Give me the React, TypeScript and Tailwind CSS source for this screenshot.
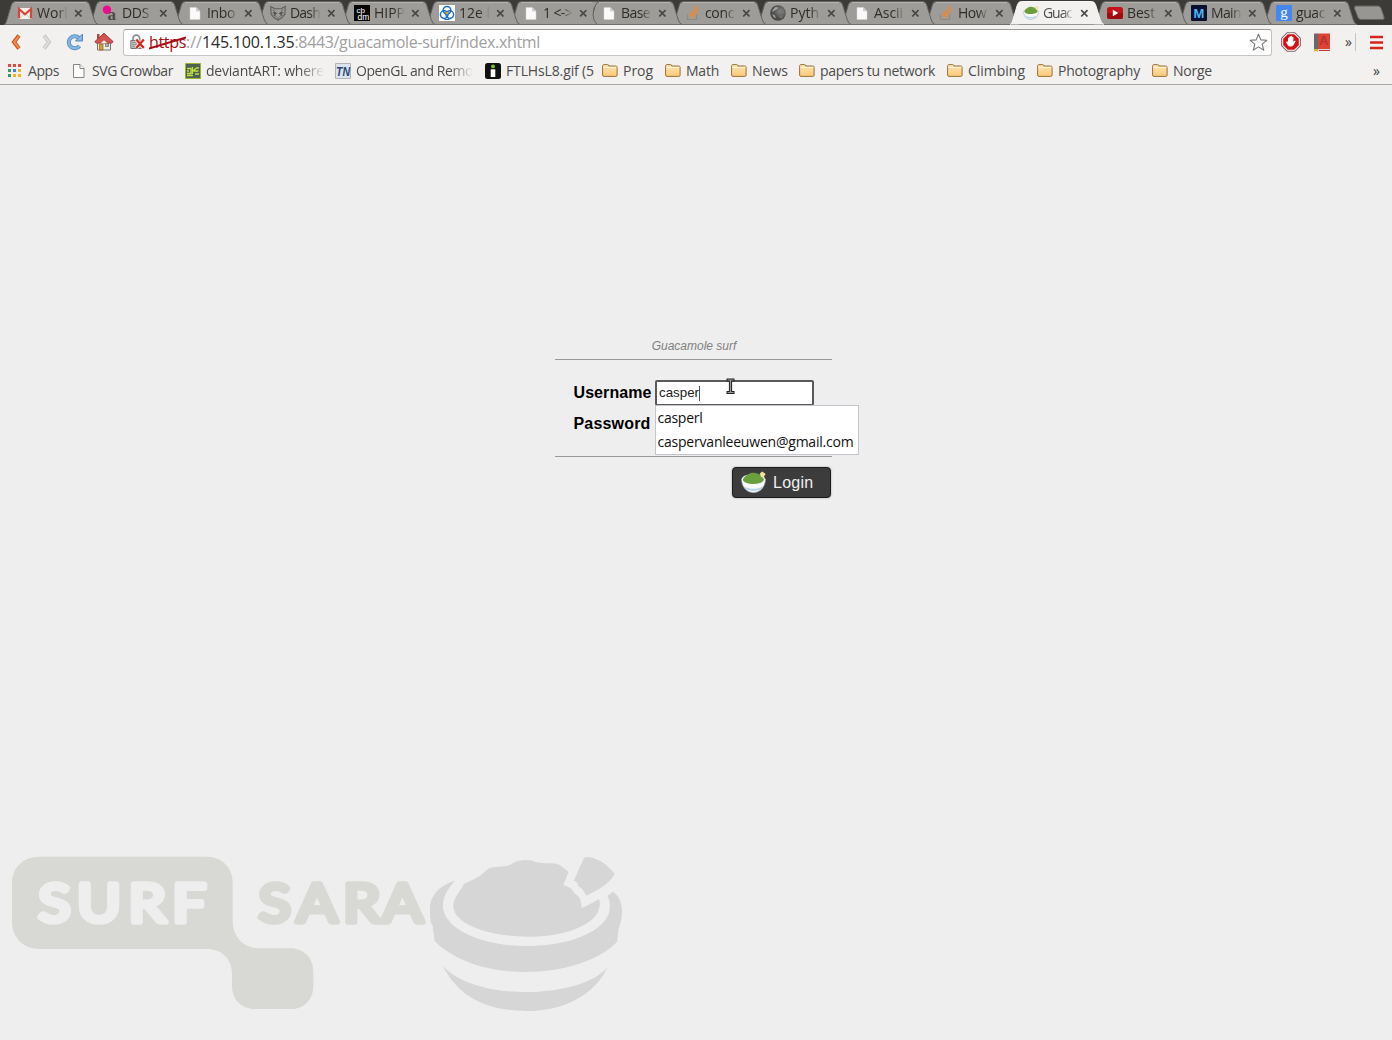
import { useLayoutEffect, useRef, useState } from "react";
import type { ReactNode } from "react";

/** A single line of text whose letter spacing is adjusted to span `width` pixels. */
function Fit({ text, width, className = "" }: { text: string; width: number; className?: string }) {
  const ref = useRef<HTMLSpanElement>(null);
  const [spacing, setSpacing] = useState(0);
  useLayoutEffect(() => {
    if (ref.current) {
      const natural = ref.current.getBoundingClientRect().width;
      setSpacing((width - natural) / text.length);
    }
  }, [text, width]);
  return (
    <span ref={ref} className={`inline-block whitespace-pre ${className}`} style={{ letterSpacing: spacing }}>
      {text}
    </span>
  );
}

const Page = ({ bright = false }: { bright?: boolean }) => (
  <svg width="16" height="16" viewBox="0 0 16 16">
    <path
      d={bright ? "M3 2.500h6.500l3.500 3.500v8.500H3z" : "M2.500 1.500h6.500l4 4v9H2.500z"}
      fill={bright ? "#fafafa" : "#fcfcfc"}
      stroke={bright ? "#d4d4d2" : "#858585"}
      strokeWidth={bright ? 0.5 : 1}
    />
    <path
      d={bright ? "M9.500 2.500v3.500h3.500z" : "M9 1.500v4h4"}
      fill={bright ? "#d0d0ce" : "#fff"}
      stroke={bright ? "#bbb" : "#858585"}
      strokeWidth={bright ? 0.5 : 1}
    />
  </svg>
);

const Gmail = () => (
  <svg width="16" height="16" viewBox="0 0 16 16">
    <rect x="1" y="3" width="14" height="11" fill="#f2f0ee" />
    <path d="M3 13l4-4M13 13L9 9" stroke="#ccc" />
    <path d="M2 13.500V4l6 5.300L14 4v9.500" fill="none" stroke="#d5473b" strokeWidth="2.200" />
  </svg>
);

const Dds = () => (
  <svg width="16" height="16" viewBox="0 0 16 16">
    <circle cx="5" cy="4.800" r="4.200" fill="#f00a8c" />
    <text x="5.500" y="14.500" fontFamily="Liberation Serif, serif" fontWeight="700" fontSize="17" fill="#4b4b4b">a</text>
  </svg>
);

const Fox = () => (
  <svg width="16" height="16" viewBox="0 0 16 16" fill="none" stroke="#5d5d59">
    <path d="M.8 1.500l4 2.200h6.400l4-2.200-.3 7.700L12 12.500 8 15.200 4 12.500 1.100 9.200z" strokeWidth="1.100" />
    <path d="M2.800 4.500l2 1.800M13.200 4.500l-2 1.800M2.500 8l2.500-1.200L7 9M13.500 8L11 6.800 9 9M3.500 10l3 1.500M12.500 10l-3 1.500M7 13h2" strokeWidth="1" />
    <circle cx="5" cy="8.500" r="1" fill="#444" />
    <circle cx="11" cy="8.500" r="1" fill="#444" />
  </svg>
);

const Cbdm = () => (
  <svg width="16" height="16" viewBox="0 0 16 16">
    <path d="M0 0h16v16H0z" fill="#050505" />
    <text x="2.500" y="7.500" fontFamily="Liberation Sans, sans-serif" fontSize="8" fill="#fff">cb</text>
    <text x="3.500" y="14.800" fontFamily="Liberation Sans, sans-serif" fontSize="8.500" fill="#fff">dm</text>
  </svg>
);

const Rings = () => (
  <svg width="16" height="16" viewBox="0 0 16 16">
    <path d="M0 0h16v16H0z" fill="#fff" />
    <g fill="none" stroke="#1d6fc4" strokeWidth="1.500">
      <circle cx="8" cy="5.200" r="3.800" />
      <circle cx="5.200" cy="9.600" r="3.800" />
      <circle cx="10.800" cy="9.600" r="3.800" />
    </g>
    <circle cx="8" cy="8" r="1.600" fill="#f0a92b" stroke="#1d6fc4" strokeWidth=".6" />
    <path d="M5.500 14.500h5" stroke="#1d6fc4" />
  </svg>
);

const Stack = () => (
  <svg width="16" height="16" viewBox="0 0 16 16" fill="none">
    <path d="M2.500 9.500v5h9v-5" stroke="#8d8b87" strokeWidth="1.200" />
    <path d="M4.300 12.500h5.600" stroke="#b39b83" strokeWidth="1.400" />
    <path d="M4.400 10l5.600 1M5.400 6.800l5.200 2.800M7.700 3.800l4 4.400M11 .8l2 5.400" stroke="#e08b3e" strokeWidth="1.900" />
  </svg>
);

const Globe = () => (
  <svg width="16" height="16" viewBox="0 0 16 16">
    <defs>
      <radialGradient id="globe" cx=".65" cy=".4">
        <stop stopColor="#858583" />
        <stop offset="1" stopColor="#484846" />
      </radialGradient>
    </defs>
    <circle cx="8" cy="8" r="7.800" fill="url(#globe)" />
    <path d="M2.500 5l3-3 3 .5-2 2-3 1.500-1 2zM2 9l2.500 1L6 13l-2-.5z" fill="#a3a3a0" />
    <path d="M10 5l3-.5 1.500 3-2 1.500-2-1zM9 11l3-1 1 1-2 3z" fill="#747472" />
  </svg>
);

const Bowl = ({ size = 16 }: { size?: number }) => (
  <svg width={size} height={size} viewBox="0 0 16 16">
    <path d="M.3 5.800c0 4.400 2.800 8.700 7.600 8.700s7.800-4.300 7.800-8.700z" fill="#f7f9fb" stroke="#8c959d" strokeWidth=".4" />
    <path d="M1.600 10.200c3 2.400 9.800 2.400 12.800 0l-1 1.700c-2.600 2-8.200 2-10.800 0z" fill="#b9d3e6" />
    <ellipse cx="8" cy="6" rx="7.500" ry="3.500" fill="#f6f8f5" />
    <path d="M1.200 6.400C1.800 4.200 3.600 3.700 5 2.600c1.500-1 4-1 5.300-.3 2 .4 3.900 2 4.400 4C13.800 9.800 2.600 9.900 1.200 6.400z" fill="#6a9f3e" />
    <path d="M12 2.200l1.600-1.200 2.200 1.500-1.600 2.500-1.300-.5z" fill="#f3dfa0" />
  </svg>
);

const Tube = () => (
  <svg width="16" height="16" viewBox="0 0 16 16">
    <rect y="2" width="16" height="12" rx="2.500" fill="#c41216" />
    <path d="M0 8h16v3.500A2.500 2.500 0 0 1 13.500 14h-11A2.500 2.500 0 0 1 0 11.500z" fill="#a00b0e" />
    <path d="M5.800 4.800v6.400L11.300 8z" fill="#fff" />
  </svg>
);

const Letter = ({ ch, bg, fg, font, y, size, weight = 700 }: { ch: string; bg: string; fg: string; font: string; y: number; size: number; weight?: number }) => (
  <svg width="16" height="16" viewBox="0 0 16 16">
    <rect width="16" height="16" rx="1" fill={bg} />
    <text x="8" y={y} textAnchor="middle" fontFamily={font} fontWeight={weight} fontSize={size} fill={fg}>
      {ch}
    </text>
  </svg>
);

const Folder = () => (
  <svg width="16" height="16" viewBox="0 0 16 16">
    <defs>
      <linearGradient id="folder" x2="0" y2="1">
        <stop stopColor="#ffe7b5" />
        <stop offset="1" stopColor="#fbc876" />
      </linearGradient>
    </defs>
    <path d="M.6 3.200c0-1 .4-1.600 1.200-1.600h3.800c.8 0 1.200.5 1.200 1.400h6.800c1 0 1.500.5 1.500 1.400v7.700c0 .8-.4 1.300-1.300 1.300H2c-.9 0-1.400-.5-1.400-1.300z" fill="url(#folder)" stroke="#9a7038" />
    <path d="M1.500 4.500h12.700" stroke="#fff3d8" />
  </svg>
);

const Apps = () => (
  <svg width="16" height="16" viewBox="0 0 16 16">
    <path d="M1 1h3v3H1zM6 1h3v3H6zM11 1h3v3h-3z" fill="#dd4b3e" />
    <path d="M1 6h3v3H1z" fill="#2f9d58" />
    <path d="M6 6h3v3H6z" fill="#3f7fe0" />
    <path d="M11 6h3v3h-3zM6 11h3v3H6zM11 11h3v3h-3z" fill="#f0b51e" />
    <path d="M1 11h3v3H1z" fill="#2f9d58" />
  </svg>
);

const Deviant = () => (
  <svg width="16" height="16" viewBox="0 0 16 16">
    <path d="M.5.5h15v15H.5z" fill="#4f6152" stroke="#9ab52b" />
    <path d="M2 5.500h4v5H2M2 8h2M2 12.500h6M7.500 4v7M8 8l3.500-3H14M9 8h4.500M10 11h4" fill="none" stroke="#c3e03d" strokeWidth="1.300" />
  </svg>
);

const Tn = () => (
  <svg width="16" height="16" viewBox="0 0 16 16">
    <path d="M.5.5h15v15H.5z" fill="#dbe4ee" stroke="#b0b4b8" />
    <text x="1" y="13" fontFamily="Liberation Sans, sans-serif" fontStyle="italic" fontWeight="700" fontSize="12" textLength="14" lengthAdjust="spacingAndGlyphs" fill="#2b4772">TN</text>
  </svg>
);

const Imgur = () => (
  <svg width="16" height="16" viewBox="0 0 16 16">
    <rect width="16" height="16" rx="2.500" fill="#111" />
    <circle cx="8" cy="3.400" r="1.900" fill="#7cc42a" />
    <path d="M5.700 6.300h4.600V14H5.700z" fill="#fff" />
  </svg>
);

type Tab = { label: string; icon: ReactNode; width: string; text: number; active?: boolean; short?: boolean };

const tabs: Tab[] = [
  { label: "Worl", icon: <Gmail />, width: "w-[85px]", text: 31 },
  { label: "DDS", icon: <Dds />, width: "w-[85px]", text: 27 },
  { label: "Inbo", icon: <Page bright />, width: "w-[83px]", text: 28 },
  { label: "Dash", icon: <Fox />, width: "w-[84px]", text: 30 },
  { label: "HIPP", icon: <Cbdm />, width: "w-[85px]", text: 31 },
  { label: "12e l", icon: <Rings />, width: "w-[84px]", text: 31 },
  { label: "1 <->", icon: <Page bright />, width: "w-[78px]", text: 29, short: true },
  { label: "Base", icon: <Page bright />, width: "w-[84px]", text: 29 },
  { label: "conc", icon: <Stack />, width: "w-[85px]", text: 29 },
  { label: "Pyth", icon: <Globe />, width: "w-[84px]", text: 29 },
  { label: "Ascii", icon: <Page bright />, width: "w-[84px]", text: 29 },
  { label: "How", icon: <Stack />, width: "w-[85px]", text: 28 },
  { label: "Guac", icon: <Bowl />, width: "w-[84px]", text: 29, active: true },
  { label: "Best", icon: <Tube />, width: "w-[84px]", text: 28 },
  {
    label: "Main",
    icon: <Letter ch="M" bg="#0a1030" fg="#4db4f5" font="Liberation Sans, sans-serif" y={12.5} size={13} />,
    width: "w-[85px]",
    text: 30,
  },
  {
    label: "guac",
    icon: <Letter ch="g" bg="#4587ee" fg="#fff" font="Liberation Serif, serif" y={11.5} size={15} weight={400} />,
    width: "w-[84px]",
    text: 29,
  },
];

function TabStrip() {
  return (
    <div className="flex h-[25px] overflow-hidden bg-[#3c3b37] pl-1">
      {tabs.map((t, i) => (
        <div key={i} className={`relative h-[25px] shrink-0 ${t.width}`} style={{ zIndex: t.active ? 40 : 30 - i }}>
          <svg className="absolute left-0 top-0" width="96" height="25" viewBox="0 0 96 25">
            <path
              d={
                t.short
                  ? "M0 24.500C2 24 2.200 21.500 3.200 19L7.500 4.500Q8.500 1.500 11.500 1.500H88Q83 7 83 14Q83 21 87 24.500"
                  : "M0 24.500C2 24 2.200 21.500 3.200 19L7.500 4.500Q8.500 1.500 11.500 1.500H81.500Q84.500 1.500 85.500 4.500L90 19Q91.500 24 94 24.500"
              }
              fill={t.active ? "#f2f1f0" : "#9d9c98"}
              stroke={t.active ? "#f7f7f6" : "#63625e"}
            />
            {!t.active && <path d="M11 2.500H82" stroke="#b5b4b0" />}
            {!t.active && <path d="M1 24.500H94" stroke="#6f6e6a" />}
          </svg>
          <div className="relative flex h-full items-center pl-[13px] pt-px">
            <span className="w-[16px] shrink-0">{t.icon}</span>
            <div
              className={`ml-1 w-[31px] overflow-hidden text-[14px] leading-5 [mask-image:linear-gradient(90deg,#000_65%,transparent)] ${t.active ? "text-[#4c4c4c]" : "text-[#302d27]"}`}
            >
              <Fit text={t.label} width={t.text} />
            </div>
            <svg className="ml-[6px]" width="9" height="9" viewBox="0 0 9 9">
              <path d="M1.200 1.200l6.300 6.300M7.500 1.200l-6.300 6.300" stroke="#484743" strokeWidth="1.700" />
            </svg>
          </div>
        </div>
      ))}
      <svg className="ml-[6px] mt-[5px] shrink-0" width="34" height="16" viewBox="0 0 34 16">
        <path d="M3 1h22q2 0 3 2l3 9q.8 2.500-1.500 2.500H8q-2 0-3-2L1.500 3.500Q1 1 3 1z" fill="#979692" stroke="#65645f" />
      </svg>
    </div>
  );
}

const Chevron = ({ flip = false }: { flip?: boolean }) => (
  <svg width="14" height="18" viewBox="0 0 14 18" fill="none">
    <path d={flip ? "M4 2.500l5 6.500-5 6.500" : "M11 2.500L6 9l5 6.500"} stroke={flip ? "#c9c8c6" : "#c6501c"} strokeWidth="4" />
    <path d={flip ? "M4 3l5 6-5 6" : "M11 3L6 9l5 6"} stroke={flip ? "#dddcda" : "#f28a50"} strokeWidth="2" />
  </svg>
);

function Toolbar() {
  return (
    <div className="flex h-[34px] items-center bg-[#f2f1f0] pl-[8px]">
      <Chevron />
      <span className="ml-[18px]"><Chevron flip /></span>
      <svg className="ml-[12px]" width="18" height="18" viewBox="0 0 18 18" fill="none">
        <path d="M13.500 13A6 6 0 1 1 13 5" stroke="#4e87bd" strokeWidth="4" />
        <path d="M9.500 8h7V1z" fill="#8ab8e3" stroke="#4e87bd" />
        <path d="M13.500 13A6 6 0 1 1 13 5" stroke="#86b5e1" strokeWidth="2.400" />
      </svg>
      <svg className="ml-[10px]" width="20" height="20" viewBox="0 0 20 20">
        <path d="M3.500 9h13v9h-13z" fill="#eeede6" stroke="#78776f" />
        <path d="M5.500 12h3.500v6H5.500z" fill="#d99a32" stroke="#8b631b" strokeWidth=".7" />
        <path d="M11.500 11.500h3v3h-3z" fill="#9cb5d0" stroke="#666" strokeWidth=".7" />
        <path d="M3 2h2.500v5H3z" fill="#a34c46" />
        <path d="M10 1.200L.8 9.700l1.500 1.400h15.400l1.500-1.400z" fill="#d05252" stroke="#a53a3a" />
        <path d="M6.500 11.200l3.500-3 3.500 3z" fill="#eeede6" />
      </svg>
      <div className="ml-[9px] flex h-[27px] w-[1149px] items-center rounded-[3px] border border-[#c5c4c2] border-t-[#9c9b98] bg-white pl-[6px]">
        <svg width="17" height="16" viewBox="0 0 17 16">
          <path d="M3 7V4.500a3.300 3.300 0 0 1 6.600 0V7" fill="none" stroke="#8e8e8e" strokeWidth="1.700" />
          <path d="M.8 6.500h10.500v8H.8z" fill="#c0c0c0" stroke="#777" />
          <path d="M2 8.500h8M2 10.500h8M2 12.500h8" stroke="#959595" />
          <path d="M6.300 5.500l7.500 8.500M13.800 5.500l-7.500 8.500" stroke="#fff" strokeWidth="3.500" />
          <path d="M6.300 5.500l7.500 8.500M13.800 5.500l-7.500 8.500" stroke="#d7261e" strokeWidth="2.300" />
        </svg>
        <div className="ml-[2px] flex whitespace-pre text-[16px] leading-6 text-[#a0a0a0]">
          <span className="relative text-[#a80c12]">
            <Fit text="https" width={37} />
            <svg className="absolute left-0 top-[6px]" width="37" height="14" viewBox="0 0 37 14">
              <path d="M0 12.500L37 1.500" stroke="#a80c12" strokeWidth="2" />
            </svg>
          </span>
          <Fit text="://" width={16} />
          <Fit text="145.100.1.35" width={92.5} className="text-[#2b2b2b]" />
          <Fit text=":8443/guacamole-surf/index.xhtml" width={245.5} />
        </div>
        <svg className="ml-auto mr-[3px]" width="19" height="19" viewBox="0 0 19 19">
          <path d="M9.500 1.300l2.300 5.600 6 .4-4.600 3.900 1.500 5.900-5.200-3.200-5.200 3.200 1.500-5.900L1.200 7.300l6-.4z" fill="#fff" stroke="#737373" strokeLinejoin="round" strokeWidth="1.100" />
        </svg>
      </div>
      <svg className="ml-[9px]" width="20" height="20" viewBox="0 0 20 20">
        <path d="M6.200.7h7.600l5.500 5.500v7.600l-5.500 5.500H6.200L.7 13.800V6.200z" fill="#fff" stroke="#7b6666" strokeWidth="1.100" />
        <path d="M6.800 2.200h6.400l4.600 4.600v6.400l-4.600 4.600H6.800l-4.600-4.600V6.800z" fill="#d31217" />
        <path d="M6 9.500l1 .2V6.300c0-1 1.300-1 1.300 0V5c0-1 1.400-1 1.400 0v-.5c0-1 1.400-1 1.400 0V5.500c0-1 1.300-1 1.300 0v4.300l1.100-1c.8-.5 1.400.2 1 .8l-2.300 4c-.7 1.300-4.500 1.300-5.200 0L5.200 10.500c-.3-.7.3-1 .8-1z" fill="#fff" />
      </svg>
      <svg className="ml-[13px]" width="17" height="19" viewBox="0 0 17 19">
        <path d="M0 .5h4v17H0z" fill="#696969" />
        <path d="M4 .5h12V16H4z" fill="#db4437" />
        <text x="9.700" y="12.300" textAnchor="middle" fontFamily="Liberation Sans, sans-serif" fontWeight="700" fontSize="13" fill="#b9332a">A</text>
        <path d="M3 16h13v2H3z" fill="#d9d9d9" />
        <path d="M5 17.500h11" stroke="#c43c31" />
        <path d="M0 16h4v3l-2-1.300L0 19z" fill="#e3b33e" />
      </svg>
      <span className="ml-[14px] text-[14px] leading-4 text-[#3a3a3a]">»</span>
      <span className="ml-[3px] h-[18px] w-px bg-[#c5c4c1]" />
      <svg className="ml-[14px]" width="13" height="15" viewBox="0 0 13 15">
        <path d="M0 2h13M0 7.500h13M0 13h13" stroke="#d6241f" strokeWidth="2.600" />
      </svg>
    </div>
  );
}

type Bookmark = { label: string; icon: ReactNode; width: string; text: number; fade?: boolean };

const bookmarks: Bookmark[] = [
  { label: "Apps", icon: <Apps />, width: "w-[64px]", text: 31 },
  { label: "SVG Crowbar", icon: <Page />, width: "w-[114px]", text: 81 },
  { label: "deviantART: where", icon: <Deviant />, width: "w-[150px]", text: 118, fade: true },
  { label: "OpenGL and Remo", icon: <Tn />, width: "w-[150px]", text: 117, fade: true },
  { label: "FTLHsL8.gif (5", icon: <Imgur />, width: "w-[117px]", text: 88 },
  { label: "Prog", icon: <Folder />, width: "w-[63px]", text: 30 },
  { label: "Math", icon: <Folder />, width: "w-[66px]", text: 33 },
  { label: "News", icon: <Folder />, width: "w-[68px]", text: 36 },
  { label: "papers tu network", icon: <Folder />, width: "w-[148px]", text: 115 },
  { label: "Climbing", icon: <Folder />, width: "w-[90px]", text: 57 },
  { label: "Photography", icon: <Folder />, width: "w-[115px]", text: 82 },
  { label: "Norge", icon: <Folder />, width: "w-[60px]", text: 39 },
];

function BookmarksBar() {
  return (
    <div className="flex h-[26px] items-center border-b border-[#aaa9a7] bg-[#f2f1f0] pb-px pl-[7px] pr-[12px] text-[14px] leading-5 text-[#4c4c4c]">
      {bookmarks.map((b) => (
        <div key={b.label} className={`flex shrink-0 items-center ${b.width}`}>
          <span className="mb-px w-[16px] shrink-0">{b.icon}</span>
          <div className={`ml-[5px] shrink-0 ${b.fade ? "[mask-image:linear-gradient(90deg,#000_80%,transparent)]" : ""}`}>
            <Fit text={b.label} width={b.text} />
          </div>
        </div>
      ))}
      <span className="ml-auto text-[#3a3a3a]">»</span>
    </div>
  );
}

function LoginForm() {
  return (
    <form className="ml-[554px] mt-[253px] w-[278px] font-['Liberation_Sans',Arial,sans-serif]">
      <h1 className="ml-px h-[22px] border-b border-[#999] pl-px text-center text-[12px] italic leading-4 text-[#808080]">
        Guacamole surf
      </h1>
      <div className="relative ml-px h-[97px] border-b border-[#999] pl-[18.500px] pt-5 text-[16px] font-bold text-black">
        <div className="flex h-[26px] items-center">
          <label className="w-[81.500px]"><Fit text="Username" width={78} /></label>
          <div className="flex h-[26px] w-[159px] items-center rounded-[2px] border-2 border-[#5a5a5a] bg-white pl-[2px] text-[13.333px] font-normal text-[#222]">
            <Fit text="casper" width={40} />
            <span className="h-[15px] w-px bg-[#555]" />
          </div>
        </div>
        <label className="mt-[9px] block leading-[18px]"><Fit text="Password" width={77} /></label>
        <div className="absolute left-[100px] top-[45px] z-10 h-[50px] w-[204px] border border-[#c4c4cc] bg-white pl-[1.500px] font-['Open_Sans','Noto_Sans',sans-serif] text-[14px] font-normal leading-6 text-[#111]">
          <div className="h-6"><Fit text="casperl" width={45} /></div>
          <div className="h-6"><Fit text="caspervanleeuwen@gmail.com" width={196} /></div>
        </div>
        <svg className="absolute left-[171px] top-[18px] z-20" width="9" height="17" viewBox="0 0 9 17">
          <path d="M.5 2h8M.5 14.500h8M4.500 2v13" fill="none" stroke="#222" strokeWidth="3.200" />
          <path d="M1.500 2h6M1.500 14.500h6M4.500 2v13" fill="none" stroke="#999" strokeWidth="1.200" />
        </svg>
      </div>
      <button
        type="button"
        className="ml-[178px] mt-[10px] flex h-[31px] w-[99px] items-center rounded-[4px] border border-[#1c1c1c] bg-[#3c3c3c] pl-[8px] text-[16px] text-[#f0f0f0] shadow-[0_0_2px_#999]"
      >
        <Bowl size={25} />
        <span className="ml-[7px]"><Fit text="Login" width={40.5} /></span>
      </button>
    </form>
  );
}

const Watermark = () => (
  <svg className="block" width="640" height="200" viewBox="0 0 640 200">
    <g fill="#d8d9d4">
      <path
        transform="scale(.33333)"
        d="M116 50H622C666 50 698 84 698 126V240C698 290 730 325 780 325H870C912 325 940 354 940 395V438C940 478 912 507 876 507H764C724 507 696 478 696 438V402C696 356 664 327 620 327H118C70 327 36 292 36 246V128C36 84 70 50 116 50Z"
      />
      <g
        transform="scale(1.15 1)"
        fontFamily="Lato, sans-serif"
        fontWeight="400"
        fontSize="52"
        strokeWidth="5.500"
        strokeLinejoin="round"
        strokeLinecap="round"
        textAnchor="middle"
      >
        <text y="82" x="47.400 86 128 164.500" fill="#eee" stroke="#eee">SURF</text>
        <text y="82" x="239 275.700 314.500 350" stroke="#d8d9d4">SARA</text>
      </g>
    </g>
    <g fill="#d6d6d6" transform="translate(320 0) scale(.33333)">
      <path d="M405 122C362 134 330 165 330 205C330 235 331 248 338 258L344 303C400 360 500 396 615 396C730 396 836 362 891 306L896 265C904 246 906 230 906 212C906 185 894 164 878 155L862 168C869 180 870 192 869 206C864 270 755 318 618 318C480 318 369 264 369 198C369 170 382 147 405 122Z" />
      <path d="M431 133C455 119 482 111 500 89C520 76 550 84 571 74C590 60 625 55 649 67C675 73 708 66 720 76L746 95L730 135C748 141 758 145 762 160C777 168 784 178 785 205L837 178C842 190 839 202 834 215C812 260 725 290 625 290C500 290 400 250 400 198C400 173 420 158 431 133Z" />
      <path d="M792 54Q796 49 812 52C838 58 862 74 884 102C866 135 832 150 799 167C790 151 784 142 774 139C774 128 768 123 761 123Z" />
      <path d="M368 377C410 426 510 456 615 456C725 456 823 428 861 383C828 460 735 513 620 513C500 513 415 470 368 377Z" />
    </g>
  </svg>
);

export default function App() {
  return (
    <div className="flex h-[1040px] w-[1392px] flex-col overflow-hidden bg-[#eee] font-['Open_Sans','Noto_Sans',sans-serif]">
      <TabStrip />
      <Toolbar />
      <BookmarksBar />
      <main className="flex flex-1 flex-col">
        <LoginForm />
        <footer className="mt-auto">
          <Watermark />
        </footer>
      </main>
    </div>
  );
}
